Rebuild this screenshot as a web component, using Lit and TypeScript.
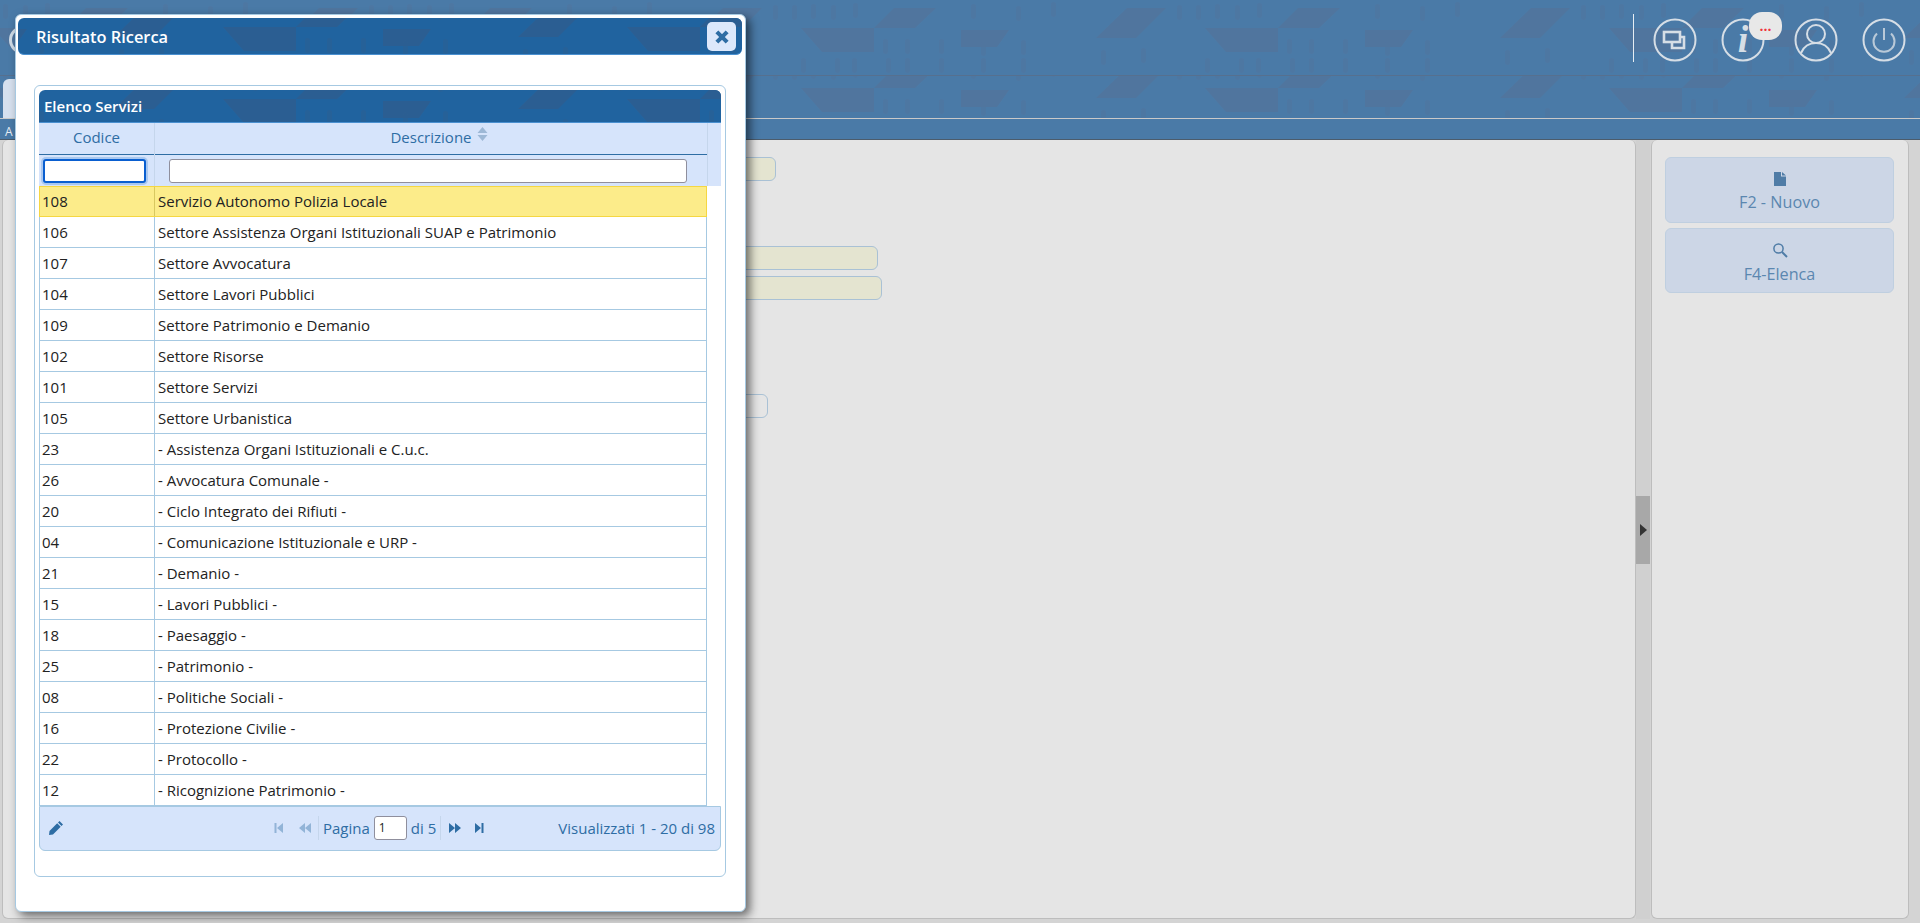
import { LitElement, html, css, svg } from "lit";
import { customElement } from "lit/decorators.js";

const rows: [string, string][] = [
  ["108", "Servizio Autonomo Polizia Locale"],
  ["106", "Settore Assistenza Organi Istituzionali SUAP e Patrimonio"],
  ["107", "Settore Avvocatura"],
  ["104", "Settore Lavori Pubblici"],
  ["109", "Settore Patrimonio e Demanio"],
  ["102", "Settore Risorse"],
  ["101", "Settore Servizi"],
  ["105", "Settore Urbanistica"],
  ["23", "- Assistenza Organi Istituzionali e C.u.c."],
  ["26", "- Avvocatura Comunale -"],
  ["20", "- Ciclo Integrato dei Rifiuti -"],
  ["04", "- Comunicazione Istituzionale e URP -"],
  ["21", "- Demanio -"],
  ["15", "- Lavori Pubblici -"],
  ["18", "- Paesaggio -"],
  ["25", "- Patrimonio -"],
  ["08", "- Politiche Sociali -"],
  ["16", "- Protezione Civilie -"],
  ["22", "- Protocollo -"],
  ["12", "- Ricognizione Patrimonio -"],
];

const bars = [
  [82, 39], [104, 39], [138, 39], [180, 41], [220, 40],
  [376, 5], [395, 5], [10, 4], [30, 5], [52, 3], [170, 4], [215, 6], [250, 2],
  [0, 58], [34, 58], [51, 58], [85, 58], [104, 58], [138, 58], [180, 58], [220, 58], [300, 50], [340, 48],
];

function pattern(id: string, tx: number, ty: number, shape: string, h = 75) {
  return html`<svg class="pat" aria-hidden="true">
    <defs>
      <pattern id=${id} width="404" height=${h} patternUnits="userSpaceOnUse" patternTransform="translate(${tx} ${ty})">
        ${svg`<g fill=${shape}>
          <polygon points="0,28 73,28 73,52 21,52"></polygon>
          <polygon points="93,8 135,8 114,28 73,28"></polygon>
          <polygon points="160,30 208,30 196,47 160,47"></polygon>
          <polygon points="326,8 365,8 335,38 295,38"></polygon>
          ${bars.map(([x, y]) => svg`<rect x=${x} y=${y} width="5" height="15" rx="2.5" opacity=".55"></rect>`)}
        </g>`}
      </pattern>
    </defs>
    <rect width="100%" height="100%" fill="url(#${id})"></rect>
  </svg>`;
}

@customElement("app-root")
export class AppRoot extends LitElement {
  static styles = css`
    :host {
      display: block;
      font-family: "Open Sans", sans-serif;
      font-size: 15px;
      color: #222;
    }
    .page {
      position: relative;
      height: 923px;
      width: 1920px;
      overflow: hidden;
      display: flex;
      flex-direction: column;
      background: #d4d4d4;
    }
    .pat {
      position: absolute;
      inset: 0;
      width: 100%;
      height: 100%;
    }
    .band {
      position: relative;
      background: #4a7aa7;
      flex: none;
      display: flex;
    }
    .band1 {
      height: 75px;
      border-bottom: 1px solid #56708f;
      align-items: flex-start;
      justify-content: flex-end;
      padding-right: 14px;
    }
    .logo {
      position: absolute;
      left: 9px;
      top: 26px;
      width: 28px;
      height: 28px;
      border: 3px solid #cfdbe6;
      border-radius: 50%;
      box-sizing: border-box;
    }
    .band2 {
      height: 42px;
      border-bottom: 1px solid #c9c9c9;
      padding-left: 3px;
      align-items: flex-end;
    }
    .tab {
      position: relative;
      width: 80px;
      height: 39px;
      background: #d6e0ee;
      border-radius: 6px 6px 0 0;
    }
    .band3 {
      height: 20px;
      border-bottom: 1px solid #4c5c6c;
      padding-left: 5px;
      color: #e8eef5;
      font-size: 12px;
      line-height: 26px;
    }
    .hdr-sep {
      position: relative;
      width: 1px;
      height: 48px;
      margin-top: 14px;
      background: #e6edf3;
      margin-right: 19px;
    }
    .hicon {
      position: relative;
      width: 44px;
      height: 44px;
      margin-top: 18px;
    }
    .hicon svg {
      display: block;
      width: 44px;
      height: 44px;
      fill: none;
      stroke: #d6dee6;
      stroke-width: 2;
    }
    .hicon .thick { stroke-width: 2.6; }
    .hicon .itext {
      fill: #d6dee6;
      stroke: none;
      font-family: "Liberation Serif", serif;
      font-weight: bold;
      font-style: italic;
      font-size: 38px;
    }
    .g24 { margin-left: 24px; }
    .g29 { margin-left: 29px; }
    .badge {
      position: absolute;
      left: 28px;
      top: -6px;
      width: 33px;
      height: 28px;
      border-radius: 13px;
      background: #e8e8e8;
      color: #f0323c;
      font-size: 14px;
      font-weight: 700;
      line-height: 28px;
      text-align: center;
    }
    .main {
      flex: 1;
      display: flex;
      padding: 0 11px 4px 2px;
      min-height: 0;
    }
    .panel {
      background: #e5e5e5;
      border: 1px solid #bdbdbd;
      border-top: none;
      border-radius: 6px;
      box-sizing: border-box;
    }
    .left {
      flex: 1;
      padding-top: 17px;
    }
    .fld {
      display: block;
      height: 24px;
      box-sizing: border-box;
      border: 1px solid #a9c1d5;
      border-radius: 6px;
      margin-left: 500px;
      background: #e4e4d0;
    }
    .f1 { width: 273px; }
    .f2 { width: 375px; margin-top: 65px; }
    .f3 { width: 379px; margin-top: 6px; }
    .f4 { width: 265px; margin-top: 94px; background: #e5e5e5; }
    .split {
      position: relative;
      width: 14px;
      background: #d0d0d0;
      flex: none;
      margin-right: 1px;
      display: flex;
      align-items: center;
    }
    .split-h {
      width: 14px;
      height: 68px;
      background: #a8a8a8;
      display: flex;
      align-items: center;
      justify-content: center;
      margin-top: 1px;
    }
    .split-h i {
      display: block;
      width: 0;
      height: 0;
      border-left: 7px solid #333;
      border-top: 6px solid transparent;
      border-bottom: 6px solid transparent;
    }
    .right {
      width: 258px;
      flex: none;
      padding: 17px 14px 0 13px;
      display: flex;
      flex-direction: column;
      gap: 5px;
    }
    .btn {
      height: 66px;
      box-sizing: border-box;
      background: #ccd6e6;
      border: 1px solid #bfcfe0;
      border-radius: 6px;
      display: flex;
      flex-direction: column;
      align-items: center;
      color: #5b87b0;
      font-size: 16.2px;
      line-height: 22px;
      padding-top: 13px;
    }
    .btn svg {
      display: block;
      width: 16px;
      height: 16px;
      margin-bottom: 4px;
    }
    .btn2 { height: 65px; }
    .btn2 svg { margin-bottom: 5px; }
    .dialog {
      position: absolute;
      left: 15px;
      top: 14px;
      width: 731px;
      height: 898px;
      box-sizing: border-box;
      background: #fff;
      border: 1px solid #a6c9e2;
      border-radius: 6px;
      padding: 3px 3px 0 2px;
      box-shadow: 4px 4px 10px rgba(0, 0, 0, 0.55);
    }
    .title {
      position: relative;
      height: 37px;
      box-sizing: border-box;
      background: #20639f;
      border-bottom: 1px solid #4a90d0;
      border-radius: 6px;
      color: #fff;
      font-size: 16.4px;
      font-weight: 600;
      line-height: 38px;
      padding-left: 18px;
      overflow: hidden;
    }
    .title span, .cap span { position: relative; }
    .close {
      position: absolute;
      right: 6px;
      top: 4px;
      width: 29px;
      height: 29px;
      background: #dce8fb;
      border-radius: 5px;
      display: flex;
      align-items: center;
      justify-content: center;
    }
    .close svg { width: 16px; height: 16px; display: block; }
    .box {
      margin: 30px 16px 0 16px;
      height: 792px;
      box-sizing: border-box;
      border: 1px solid #a6c9e2;
      border-radius: 6px;
      padding: 4px 4px 0 4px;
    }
    .cap {
      position: relative;
      height: 33px;
      box-sizing: border-box;
      background: #20639f;
      border-bottom: 1px solid #4a90d0;
      border-radius: 6px 6px 0 0;
      overflow: hidden;
      color: #fff;
      font-size: 15px;
      font-weight: 600;
      line-height: 33px;
      padding-left: 5px;
    }
    .thead {
      display: grid;
      grid-template-columns: 115px 1px 552px 14px;
      background: #d6e4fb;
      height: 63px;
      position: relative;
    }
    .th {
      height: 31px;
      line-height: 29px;
      text-align: center;
      color: #2e6da4;
      border-bottom: 1px solid #2e6da4;
    }
    .th-sep { background: #c5d6ec; height: 63px; grid-row: 1 / span 2; grid-column: 2; }
    .th-end { border-left: 1px solid #c5d6ec; height: 63px; grid-column: 4; grid-row: 1 / span 2; box-sizing: border-box; }
    .sort {
      display: inline-block;
      vertical-align: 2px;
      margin-left: 5px;
      margin-right: -16px;
      width: 11px;
      height: 14px;
    }
    .ff { height: 31px; display: flex; align-items: center; }
    input {
      font: inherit;
      box-sizing: border-box;
      height: 24px;
      background: #fff;
      border: 1px solid #8f8f9d;
      border-radius: 3px;
      padding: 0 3px;
      outline: none;
      margin: 0;
      display: block;
    }
    .fcode {
      margin-left: 4px;
      width: 103px;
      border: 2px solid #0a5fd0;
      box-shadow: 0 0 0 2px #a9c8f0;
    }
    .fdesc { margin-left: 14px; width: 518px; }
    .row {
      display: grid;
      grid-template-columns: 116px 552px;
      width: 668px;
      height: 31px;
      box-sizing: border-box;
      border-bottom: 1px solid #a6c9e2;
      line-height: 30px;
    }
    .row div { padding-left: 3px; white-space: nowrap; overflow: hidden; }
    .c1 { border-left: 1px solid #a6c9e2; border-right: 1px solid #a6c9e2; padding-left: 2px !important; }
    .c2 { border-right: 1px solid #a6c9e2; }
    .sel {
      background: #fcec8a;
      border-bottom: 1px solid #f5d742;
      border-top: 1px solid #f5d742;
      line-height: 29px;
    }
    .sel .c1 { border-left-color: #f5d742; border-right-color: #d8c860; }
    .sel .c2 { border-right-color: #f5d742; }
    .pager {
      height: 45px;
      box-sizing: border-box;
      background: #d6e4fb;
      border: 1px solid #a6c9e2;
      border-radius: 0 0 6px 6px;
      padding-bottom: 2px;
      display: grid;
      grid-template-columns: 234px auto 1fr;
      align-items: center;
      color: #2e6da4;
    }
    .pencil { margin-left: 8px; width: 16px; height: 16px; display: block; }
    .pg { display: flex; align-items: center; height: 24px; margin-left: -1px; }
    .pg svg { display: block; width: 12px; height: 12px; fill: #2e6da4; }
    .dim { opacity: 0.4; }
    .pg .p1 { margin-right: 14px; }
    .pg .p2 { margin-right: 7px; }
    .vs { width: 1px; height: 24px; background: #c5d6ec; }
    .pg .lbl { margin: 0 4px; }
    .pnum {
      width: 33px;
      height: 24px;
      font-size: 12px;
      color: #222;
      padding: 0 4px;
      border-radius: 3px;
    }
    .pg .p3 { margin: 0 12px 0 8px; }
    .vis { text-align: right; padding-right: 5px; }
  `;

  render() {
    return html`<div class="page">
      <div class="band band1">
        ${pattern("h1", 397, 0, "#50759e")}
        <div class="logo"></div>
        <div class="hdr-sep"></div>
        <div class="hicon">
          <svg viewBox="0 0 44 44">
            <circle cx="22" cy="22" r="20.5"></circle>
            <rect class="thick" x="11" y="14" width="16" height="10"></rect>
            <path class="thick" d="M19 24 V30 H31 V19 H27"></path>
          </svg>
        </div>
        <div class="hicon g24">
          <svg viewBox="0 0 44 44">
            <circle cx="22" cy="22" r="20.5"></circle>
            <text class="itext" x="22" y="34" text-anchor="middle">i</text>
          </svg>
          <div class="badge">...</div>
        </div>
        <div class="hicon g29">
          <svg viewBox="0 0 44 44">
            <circle cx="22" cy="22" r="20.5"></circle>
            <circle cx="22" cy="16" r="9"></circle>
            <path d="M7 35 C10 28 15 25 22 25 C29 25 34 28 37 35"></path>
          </svg>
        </div>
        <div class="hicon g24">
          <svg viewBox="0 0 44 44">
            <circle cx="22" cy="22" r="20.5"></circle>
            <path d="M15 15.500 A10.500 10.500 0 1 0 29 15.500" stroke="#b9c9d8"></path>
            <path d="M22 10 V22" stroke="#b9c9d8"></path>
          </svg>
        </div>
      </div>
      <div class="band band2">
        ${pattern("h2", 397, -16, "#50759e")}
        <div class="tab"></div>
      </div>
      <div class="band band3">A</div>
      <div class="main">
        <div class="panel left">
          <span class="fld f1"></span>
          <span class="fld f2"></span>
          <span class="fld f3"></span>
          <span class="fld f4"></span>
        </div>
        <div class="split"><div class="split-h"><i></i></div></div>
        <div class="panel right">
          <div class="btn">
            <svg viewBox="0 0 16 16"><path fill="#4f7ca6" d="M2 1 H9 V5.500 H14 V15 H2 Z M10 1 L14 4.500 H10 Z"></path></svg>
            F2 - Nuovo
          </div>
          <div class="btn btn2">
            <svg viewBox="0 0 16 16"><circle cx="6.500" cy="6.500" r="4.600" fill="none" stroke="#4f7ca6" stroke-width="1.500"></circle><path d="M10 10 L15 15" stroke="#4f7ca6" stroke-width="2"></path></svg>
            F4-Elenca
          </div>
        </div>
      </div>

      <div class="dialog">
        <div class="title">
          ${pattern("t1", 205, -19, "#2b5e92")}
          <span>Risultato Ricerca</span>
          <div class="close">
            <svg viewBox="0 0 14 14"><path d="M2.500 2.500 L11.500 11.500 M11.500 2.500 L2.500 11.500" stroke="#2e6da4" stroke-width="3.600"></path></svg>
          </div>
        </div>
        <div class="box">
          <div class="cap">
            ${pattern("t2", 184, -19, "#2b5e92")}
            <span>Elenco Servizi</span>
          </div>
          <div class="thead">
            <div class="th">Codice</div>
            <div class="th-sep"></div>
            <div class="th" style="grid-column:3">Descrizione<svg class="sort" viewBox="0 0 11 14"><path fill="#9db8d6" d="M5.500 0 L10.500 6 H0.500 Z M0.500 8 H10.500 L5.500 14 Z"></path></svg></div>
            <div class="th-end"></div>
            <div class="ff" style="grid-column:1;grid-row:2"><input class="fcode" type="text" /></div>
            <div class="ff" style="grid-column:3;grid-row:2"><input class="fdesc" type="text" /></div>
          </div>
          ${rows.map(
            ([c, d], i) => html`<div class="row ${i === 0 ? "sel" : ""}">
              <div class="c1">${c}</div>
              <div class="c2">${d}</div>
            </div>`
          )}
          <div class="pager">
            <svg class="pencil" viewBox="0 0 16 16"><path fill="#2e6da4" d="M11.500 1 L15 4.500 L13.500 6 L10 2.500 Z M9.200 3.300 L12.700 6.800 L5 14.500 L1 15 L1.500 11 Z"></path></svg>
            <div class="pg">
              <svg class="p1 dim" viewBox="0 0 12 12"><path d="M1.500 1 H3.500 V11 H1.500 Z M10 1 V11 L4 6 Z"></path></svg>
              <svg class="p2 dim" viewBox="0 0 12 12"><path d="M6 1 V11 L0 6 Z M12 1 V11 L6 6 Z"></path></svg>
              <div class="vs"></div>
              <span class="lbl">Pagina</span>
              <input class="pnum" type="text" .value=${"1"} />
              <span class="lbl">di 5</span>
              <div class="vs"></div>
              <svg class="p3" viewBox="0 0 12 12"><path d="M0 1 L6 6 L0 11 Z M6 1 L12 6 L6 11 Z"></path></svg>
              <svg viewBox="0 0 12 12"><path d="M2 1 L8 6 L2 11 Z M8.500 1 H10.500 V11 H8.500 Z"></path></svg>
            </div>
            <div class="vis">Visualizzati 1 - 20 di 98</div>
          </div>
        </div>
      </div>
    </div>`;
  }
}
